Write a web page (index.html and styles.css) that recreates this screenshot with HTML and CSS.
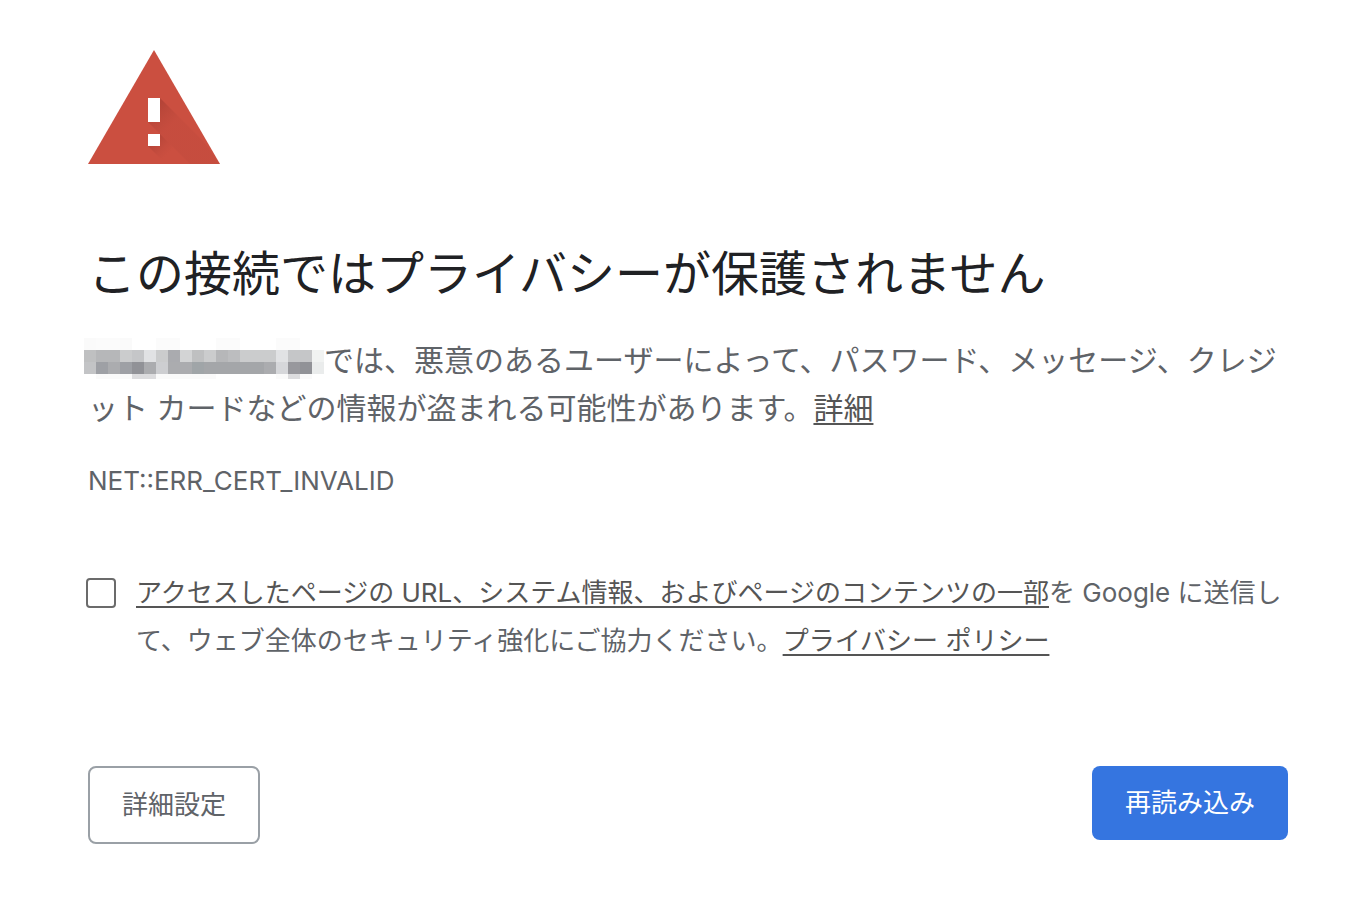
FILE: index.html
```html
<!DOCTYPE html>
<html lang="ja">
  <head>
    <meta charset="utf-8" />
    <meta name="viewport" content="width=device-width, initial-scale=1" />
    <title>プライバシー エラー</title>
    <link rel="stylesheet" href="styles.css">
  </head>
  <body>
    <main class="interstitial">
      <svg class="warning-icon" viewBox="0 0 132 114" aria-hidden="true">
        <defs>
          <linearGradient id="shade" gradientUnits="userSpaceOnUse" x1="66" y1="60" x2="82" y2="76">
            <stop offset="0" stop-color="#a63d32" stop-opacity="0.6" />
            <stop offset="1" stop-color="#b8463a" stop-opacity="0.25" />
          </linearGradient>
          <linearGradient id="shade-dot" gradientUnits="userSpaceOnUse" x1="66" y1="90" x2="80" y2="104">
            <stop offset="0" stop-color="#a63d32" stop-opacity="0.6" />
            <stop offset="1" stop-color="#b8463a" stop-opacity="0" />
          </linearGradient>
        </defs>
        <path fill="#cb4f40" d="M66 0l66 114H0z" />
        <path fill="url(#shade)" d="M72 48l43 43 17 23H102L60 72z" />
        <path fill="url(#shade-dot)" d="M72 84l30 30H78L60 96z" />
        <path fill="#fff" d="M60 48h12v24H60zM60 84h12v12H60z" />
      </svg>

      <h1>この接続ではプライバシーが保護されません</h1>

      <p class="message"><svg class="masked-host" viewBox="0 0 240 41" shape-rendering="crispEdges" aria-hidden="true">
          <g>
            <path fill="#fafafa" d="M0 0h12v12H0zM36 0h12v12H36z" />
            <path fill="#fbfbfb" d="M12 0h24v12H12zM72 0h24v12H72zM132 0h24v12H132zM192 0h24v12H192z" />
          </g>
          <g>
            <path fill="#bfc0c1" d="M0 12h12v12H0zM108 12h12v12H108z" />
            <path fill="#b6b7b9" d="M12 12h24v12H12zM132 12h12v12H132z" />
            <path fill="#cbcccd" d="M36 12h12v12H36zM72 12h12v12H72zM120 12h12v12H120zM156 12h36v12H156z" />
            <path fill="#c5c6c8" d="M48 12h12v12H48zM204 12h24v12H204z" />
            <path fill="#e1e2e4" d="M60 12h12v12H60zM192 12h12v12H192z" />
            <path fill="#aaabaf" d="M84 12h12v12H84z" />
            <path fill="#d3d4d5" d="M96 12h12v12H96z" />
            <path fill="#bcbdbf" d="M144 12h12v12H144z" />
            <path fill="#f1f3f2" d="M228 12h12v12H228z" />
          </g>
          <g>
            <path fill="#c3c4c6" d="M0 24h12v12H0z" />
            <path fill="#9ea0a5" d="M12 24h12v12H12zM36 24h12v12H36z" />
            <path fill="#abacaf" d="M24 24h12v12H24zM60 24h12v12H60zM84 24h24v12H84zM180 24h12v12H180z" />
            <path fill="#919297" d="M48 24h12v12H48zM216 24h12v12H216z" />
            <path fill="#cdced1" d="M72 24h12v12H72z" />
            <path fill="#a0a5a8" d="M108 24h12v12H108z" />
            <path fill="#a4a6a9" d="M120 24h60v12H120z" />
            <path fill="#d6d7da" d="M192 24h12v12H192z" />
            <path fill="#98989d" d="M204 24h12v12H204z" />
            <path fill="#eaecec" d="M228 24h12v12H228z" />
          </g>
          <g>
            <path fill="#fafafa" d="M12 36h36v5H12zM72 36h60v5H72zM192 36h12v5H192zM216 36h12v5H216z" />
            <path fill="#dcdcde" d="M48 36h24v5H48zM204 36h12v5H204z" />
          </g>
        </svg>では、悪意のあるユーザーによって、パスワード、メッセージ、クレジット カードなどの情報が盗まれる可能性があります。<a href="#">詳細</a></p>

      <div class="error-code">NET::ERR_CERT_INVALID</div>

      <div class="opt-in">
        <input type="checkbox" id="opt-in-checkbox" />
        <label for="opt-in-checkbox"><a href="#">アクセスしたページの URL、システム情報、およびページのコンテンツの一部</a>を Google に送信して、ウェブ全体のセキュリティ強化にご協力ください。<a href="#">プライバシー ポリシー</a></label>
      </div>

      <div class="nav-buttons">
        <button type="button" class="secondary-button">詳細設定</button>
        <button type="button" class="primary-button">再読み込み</button>
      </div>
    </main>
  </body>
</html>
```

FILE: styles.css
```css
body {
  margin: 0;
  background: #fff;
  color: #5f6368;
  font-family: Inter, "Noto Sans CJK JP", sans-serif;
  font-size: 26px;
  line-height: 48px;
}

a {
  color: #555;
  text-decoration: underline;
  text-decoration-thickness: 2px;
  text-underline-offset: 4px;
}

button {
  box-sizing: border-box;
  font: inherit;
  line-height: 40px;
  border-radius: 8px;
  cursor: pointer;
}

.interstitial {
  padding: 50px 82px 60px 88px;
}

.warning-icon {
  display: block;
  width: 132px;
  height: 114px;
}

h1 {
  margin: 80px 0 32px;
  color: #202124;
  font-size: 48px;
  font-weight: 400;
  line-height: 60px;
}

.message {
  margin: 0;
  font-size: 30px;
}

.masked-host {
  width: 240px;
  height: 41px;
  margin: -12px 0 -4px -4px;
  vertical-align: middle;
}

.error-code {
  margin-top: 25px;
}

.opt-in {
  display: flex;
  align-items: flex-start;
  gap: 20px;
  margin: 64px 0 0 -2px;
}

.opt-in input {
  flex: none;
  appearance: none;
  box-sizing: border-box;
  width: 30px;
  height: 30px;
  margin: 9px 0 0;
  background: #fff;
  border: 2px solid #6b6b6b;
  border-radius: 4px;
}

.opt-in input:checked {
  background: #3575e0;
}

.nav-buttons {
  display: flex;
  justify-content: space-between;
  align-items: flex-start;
  margin-top: 101px;
}

.secondary-button {
  padding: 17px 32px;
  background: #fff;
  border: 2px solid #9aa0a6;
  color: #5f6368;
}

.primary-button {
  padding: 17px 33px;
  background: #3575e0;
  border: 0;
  color: #fff;
}
```
